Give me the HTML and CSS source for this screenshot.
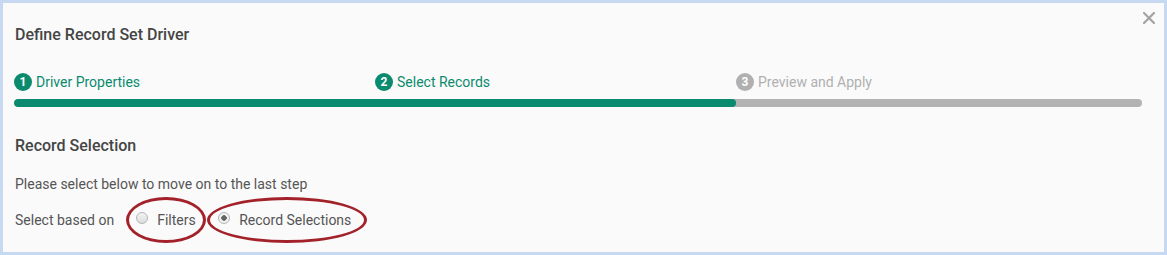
FILE: index.html
```html
<!DOCTYPE html>
<html lang="en">
<head>
  <meta charset="UTF-8">
  <title>Define Record Set Driver</title>
  <link rel="stylesheet" href="styles.css">
</head>
<body>
  <div class="dialog">
    <button class="close" aria-label="Close">
      <svg width="12" height="12" viewBox="0 0 12 12"><path d="M1 1L11 11M11 1L1 11" stroke="#a3a3a3" stroke-width="2.2" stroke-linecap="square"/></svg>
    </button>

    <h2 class="title">Define Record Set Driver</h2>

    <div class="steps">
      <div class="step done"><span class="num">1</span>Driver Properties</div>
      <div class="step done"><span class="num">2</span>Select Records</div>
      <div class="step"><span class="num">3</span>Preview and Apply</div>
    </div>
    <div class="progress"><div class="progress-fill"></div></div>

    <h3 class="section-title">Record Selection</h3>
    <p class="hint">Please select below to move on to the last step</p>

    <div class="select-row">
      <span class="select-label">Select based on</span>
      <label class="option mark-small"><span class="radio"></span>Filters</label>
      <label class="option mark-wide"><span class="radio checked"></span>Record Selections</label>
    </div>
  </div>
</body>
</html>
```

FILE: styles.css
```css
/* Page frame */
body {
  margin: 0;
  padding: 3px;
  background-color: #c6d9f1;
  font-family: Roboto, "Liberation Sans", Arial, sans-serif;
}

.dialog {
  position: relative;
  height: 249px;
  box-sizing: border-box;
  padding: 22px 12px 0;
  background-color: #fafafa;
}

/* Close button */
.close {
  position: absolute;
  top: 9px;
  right: 9px;
  padding: 0;
  border: none;
  background: none;
  line-height: 0;
  cursor: pointer;
}

/* Headings */
.title {
  margin: 0;
  font-size: 16px;
  line-height: 20px;
  font-weight: 500;
  color: #454545;
}

/* Wizard steps */
.steps {
  display: grid;
  grid-template-columns: 361px 361px 1fr;
  margin-top: 28px;
  margin-left: -1px;
}

.step {
  display: flex;
  align-items: center;
  font-size: 14px;
  line-height: 18px;
  color: #b0b0b0;
}

.step.done {
  color: #0a8a6e;
}

.num {
  display: inline-flex;
  align-items: center;
  justify-content: center;
  width: 18px;
  height: 18px;
  margin-right: 4px;
  border-radius: 50%;
  background-color: #b0b0b0;
  color: #fff;
  font-size: 12px;
  font-weight: 700;
}

.step.done .num {
  background-color: #0a8a6e;
}

.progress {
  height: 8px;
  margin: 8px 10px 0 -1px;
  border-radius: 4px;
  background-color: #b3b3b3;
  overflow: hidden;
}

.progress-fill {
  width: 722px;
  height: 100%;
  border-radius: 4px;
  background-color: #0a8a6e;
}

/* Record selection */
.section-title {
  margin: 29px 0 0;
  font-size: 16px;
  line-height: 20px;
  font-weight: 500;
  color: #454545;
}

.hint {
  margin: 18px 0 0;
  font-size: 14px;
  line-height: 20px;
  color: #555;
}

.select-row {
  display: flex;
  align-items: center;
  margin-top: 3px;
  font-size: 14px;
  color: #555;
}

.select-label {
  margin-right: 12px;
}

.option {
  display: inline-flex;
  align-items: center;
  box-sizing: border-box;
  height: 46px;
  border: 3px solid #a3222a;
  border-radius: 50%;
}

.mark-small {
  width: 80px;
  padding-left: 7px;
}

.mark-wide {
  width: 160px;
  margin-left: 1px;
  padding-left: 8px;
}

.radio {
  display: inline-block;
  box-sizing: border-box;
  width: 12px;
  height: 12px;
  margin: -4px 9px 0 0;
  border: 1px solid #b5b5b5;
  border-radius: 50%;
  background: linear-gradient(#f4f4f4, #dcdcdc);
}

.radio.checked {
  background: radial-gradient(circle, #666 0 2.5px, #f2f2f2 3px);
}
```
